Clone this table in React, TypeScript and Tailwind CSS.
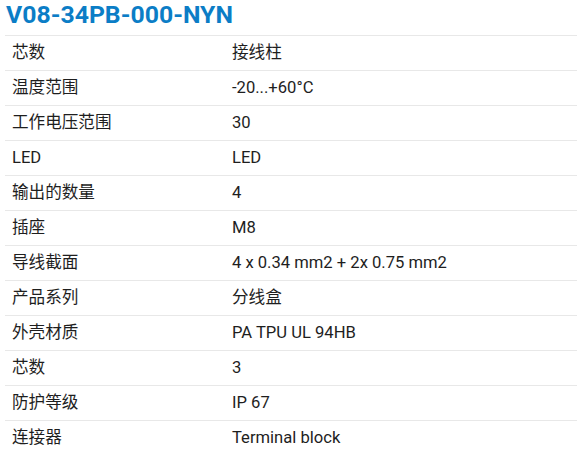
const rows: [string, string][] = [
  ['芯数', '接线柱'],
  ['温度范围', '-20...+60°C'],
  ['工作电压范围', '30'],
  ['LED', 'LED'],
  ['输出的数量', '4'],
  ['插座', 'M8'],
  ['导线截面', '4 x 0.34 mm2 + 2x 0.75 mm2'],
  ['产品系列', '分线盒'],
  ['外壳材质', 'PA TPU UL 94HB'],
  ['芯数', '3'],
  ['防护等级', 'IP 67'],
  ['连接器', 'Terminal block'],
];

const App = () => {
  return (
    <div
      className="w-[577px] h-[454px] bg-white overflow-hidden"
      style={{ fontFamily: 'Roboto, "Noto Sans CJK SC", sans-serif' }}
    >
      <h1 className="pl-[6px] pt-[1px] h-[35px] text-[24.8px] leading-[28px] font-bold text-[#0b7dc6]">
        V08-34PB-000-NYN
      </h1>
      <div className="ml-[5px]">
        {rows.map(([label, value], i) => (
          <div
            key={i}
            className="flex h-[35px] items-center border-t border-[#e8e8e8] text-[16.6px] text-[#1e1e1e]"
          >
            <div className="w-[227px] pl-[7px]">{label}</div>
            <div>{value}</div>
          </div>
        ))}
      </div>
    </div>
  );
};

export default App;
